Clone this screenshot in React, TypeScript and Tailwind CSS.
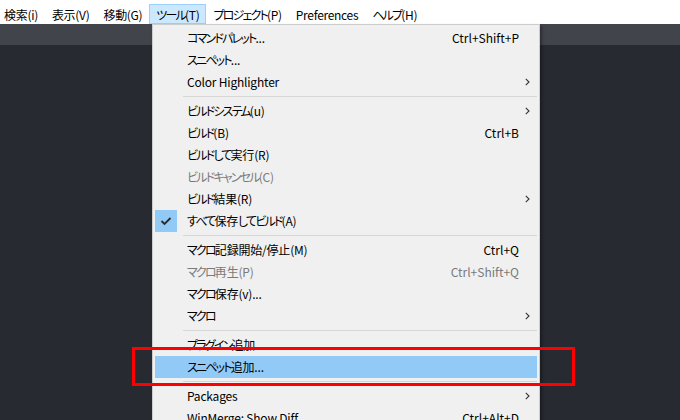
type MenuEntry =
  | "sep"
  | {
      label: string;
      shortcut?: string;
      submenu?: boolean;
      disabled?: boolean;
      checked?: boolean;
      active?: boolean;
    };

const topMenus = ["検索(i)", "表示(V)", "移動(G)", "ツール(T)", "プロジェクト(P)", "Preferences", "ヘルプ(H)"];

const toolItems: MenuEntry[] = [
  { label: "コマンドパレット...", shortcut: "Ctrl+Shift+P" },
  { label: "スニペット..." },
  { label: "Color Highlighter", submenu: true },
  "sep",
  { label: "ビルドシステム(u)", submenu: true },
  { label: "ビルド(B)", shortcut: "Ctrl+B" },
  { label: "ビルドして実行(R)" },
  { label: "ビルドキャンセル(C)", disabled: true },
  { label: "ビルド結果(R)", submenu: true },
  { label: "すべて保存してビルド(A)", checked: true },
  "sep",
  { label: "マクロ記録開始/停止(M)", shortcut: "Ctrl+Q" },
  { label: "マクロ再生(P)", shortcut: "Ctrl+Shift+Q", disabled: true },
  { label: "マクロ保存(v)..." },
  { label: "マクロ", submenu: true },
  "sep",
  { label: "プラグイン追加..." },
  { label: "スニペット追加...", active: true },
  "sep",
  { label: "Packages", submenu: true },
  { label: "WinMerge: Show Diff", shortcut: "Ctrl+Alt+D" },
];

// kana in the Windows UI font are much narrower than Noto's, so squeeze them
function Label({ text }: { text: string }) {
  const parts = text.split(/([\u3040-\u30ff]+)/);
  return (
    <>
      {parts.map((p, i) =>
        i % 2 === 1 ? (
          <span key={i} className="tracking-[-1.8px]">
            {p}
          </span>
        ) : (
          <span key={i}>{p}</span>
        )
      )}
    </>
  );
}

function Chevron() {
  return (
    <svg width="5" height="8" viewBox="0 0 5 8" className="block">
      <path d="M0.8 0.8 L4 4 L0.8 7.2" fill="none" stroke="#333" strokeWidth="1.1" />
    </svg>
  );
}

function Check() {
  return (
    <svg width="12" height="10" viewBox="0 0 12 10" className="block">
      <path d="M1.5 5 L4.5 8 L10.5 2" fill="none" stroke="#2b2b2b" strokeWidth="1.8" />
    </svg>
  );
}

export default function App() {
  return (
    <div className="relative h-[420px] w-[680px] overflow-hidden bg-[#282a32] font-['Noto_Sans_CJK_JP','Noto_Sans',sans-serif] text-[12px] text-black [font-feature-settings:'palt'_1]">
      {/* menu bar */}
      <div className="flex h-[24px] items-end bg-white">
        <div className="-ml-[3px] flex tracking-[-0.3px]">
          {topMenus.map((m) => (
            <div
              key={m}
              className={
                m === "ツール(T)"
                  ? "flex h-[20px] items-center border border-[#99d1ff] bg-[#cce8ff] px-[6px] pt-px leading-none"
                  : "flex h-[20px] items-center border border-transparent px-[6px] pt-px leading-none"
              }
            >
              <Label text={m} />
            </div>
          ))}
        </div>
      </div>
      <div className="h-[21px] bg-[#41444b]" />

      {/* tools dropdown */}
      <div className="absolute left-[152px] top-[24px] w-[388px] border border-[#cccccc] bg-[#f0f0f0] px-[2px] pt-[2px] shadow-[2px_2px_3px_rgba(0,0,0,0.35)]">
        {toolItems.map((item, i) =>
          item === "sep" ? (
            <div key={i} className="flex h-[7px] items-center pl-[28px]">
              <div className="h-px w-full bg-[#d7d7d7]" />
            </div>
          ) : (
            <div
              key={i}
              className={
                "flex h-[22px] items-center leading-none " +
                (item.active ? "bg-[#91c9f7] " : "") +
                (item.disabled ? "text-[#7a7a7a]" : "text-black")
              }
            >
              <div className={"flex h-[22px] w-[22px] items-center justify-center " + (item.checked ? "bg-[#91c9f7]" : "")}>
                {item.checked ? <Check /> : null}
              </div>
              <div className="flex-1 pl-[10px] tracking-[-0.2px]">
                <Label text={item.label} />
              </div>
              {item.shortcut ? <div>{item.shortcut}</div> : null}
              <div className="flex w-[18px] items-center pl-[6px]">{item.submenu ? <Chevron /> : null}</div>
            </div>
          )
        )}
      </div>

      {/* red highlight box */}
      <div className="absolute left-[132px] top-[347px] h-[39px] w-[443px] border-[3px] border-[#ff0000]" />
    </div>
  );
}
